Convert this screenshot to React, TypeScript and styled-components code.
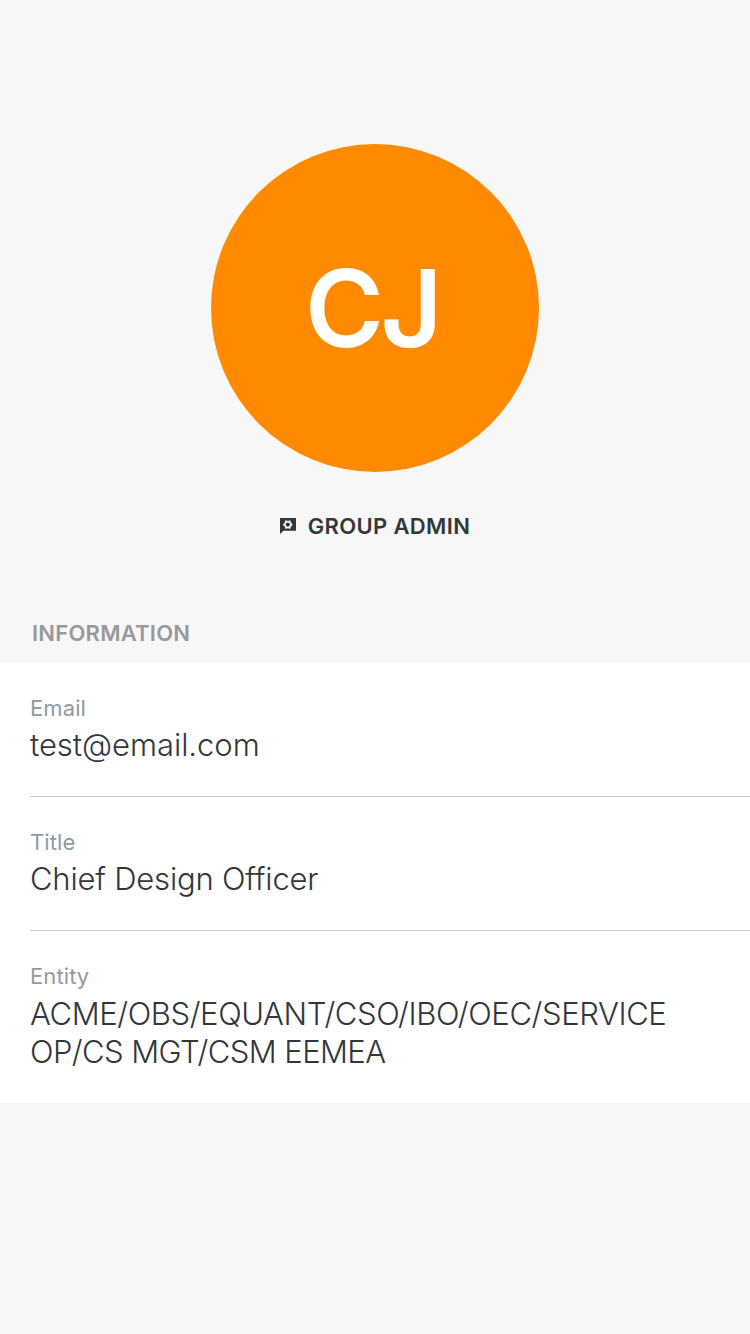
import React from "react";
import styled, { createGlobalStyle } from "styled-components";

const GlobalStyle = createGlobalStyle`
  body {
    margin: 0;
    background: #f7f7f7;
    font-family: Inter, "Liberation Sans", sans-serif;
    color: #32373b;
  }
`;

const Page = styled.main`
  display: flex;
  flex-direction: column;
  min-height: 1334px;
  background: #f7f7f7;
`;

const Profile = styled.header`
  display: flex;
  flex-direction: column;
  align-items: center;
  gap: 38px;
  padding-top: 144px;
`;

const Avatar = styled.div`
  display: flex;
  align-items: center;
  justify-content: center;
  width: 328px;
  height: 328px;
  box-sizing: border-box;
  padding-right: 6px;
  border-radius: 50%;
  background: #ff8a00;
  color: #fff;
  font-size: 107px;
  line-height: 130px;
  font-weight: 600;
  letter-spacing: -3.5px;
`;

const Role = styled.div`
  display: flex;
  align-items: center;
  gap: 12px;
  height: 32px;
  font-size: 22px;
  line-height: 32px;
  font-weight: 580;
  letter-spacing: 0.34px;
  white-space: nowrap;
`;

const RoleIcon = styled.svg`
  width: 16px;
  height: 16px;
  flex: none;
`;

const SectionTitle = styled.h2`
  margin: 77px 0 0;
  padding: 0 0 16px 32px;
  font-size: 22px;
  line-height: 28px;
  font-weight: 580;
  letter-spacing: 0.24px;
  color: #999;
`;

const Fields = styled.dl`
  margin: 0;
  padding-left: 30px;
  background: #fff;
`;

const Field = styled.div`
  padding: 31px 60px 32px 0;

  &:not(:last-child) {
    border-bottom: 1px solid #c8cccd;
  }
`;

const Label = styled.dt`
  font-size: 22px;
  line-height: 28px;
  font-weight: 400;
  letter-spacing: 0.1px;
  color: #8f9ba2;
`;

const Value = styled.dd<{ $multiline: boolean }>`
  margin: ${({ $multiline }) => ($multiline ? 5 : 4)}px 0 0;
  font-size: 31px;
  line-height: 38px;
  font-weight: 300;
`;

const Line = styled.span<{ $tracking: number }>`
  display: block;
  letter-spacing: ${({ $tracking }) => $tracking}px;
  white-space: nowrap;
`;

const fields = [
  { label: "Email", lines: [{ text: "test@email.com", tracking: -0.05 }] },
  { label: "Title", lines: [{ text: "Chief Design Officer", tracking: -0.2 }] },
  {
    label: "Entity",
    lines: [
      { text: "ACME/OBS/EQUANT/CSO/IBO/OEC/SERVICE", tracking: -0.4 },
      { text: "OP/CS MGT/CSM EEMEA", tracking: -0.58 },
    ],
  },
];

export default function App() {
  return (
    <Page>
      <GlobalStyle />
      <Profile>
        <Avatar>CJ</Avatar>
        <Role>
          <RoleIcon viewBox="0 0 16 16" aria-hidden="true">
            <path d="M0 0H16V12.7H3.4L0 16Z" fill="#32373b" />
            <g stroke="#f7f7f7" fill="none">
              <circle cx="7.8" cy="6.6" r="3" strokeWidth="1.7" />
              <path
                d="M6.2 3.8 5.6 2.5M9.4 3.8 10 2.5M11 6.6h1.4M4.6 6.6H3.2M6.2 9.4 5.6 10.7M9.4 9.4 10 10.7"
                strokeWidth="1.7"
              />
            </g>
          </RoleIcon>
          <span>GROUP ADMIN</span>
        </Role>
      </Profile>
      <SectionTitle>INFORMATION</SectionTitle>
      <Fields>
        {fields.map(({ label, lines }) => (
          <Field key={label}>
            <Label>{label}</Label>
            <Value $multiline={lines.length > 1}>
              {lines.map(({ text, tracking }) => (
                <Line key={text} $tracking={tracking}>
                  {text}
                </Line>
              ))}
            </Value>
          </Field>
        ))}
      </Fields>
    </Page>
  );
}
